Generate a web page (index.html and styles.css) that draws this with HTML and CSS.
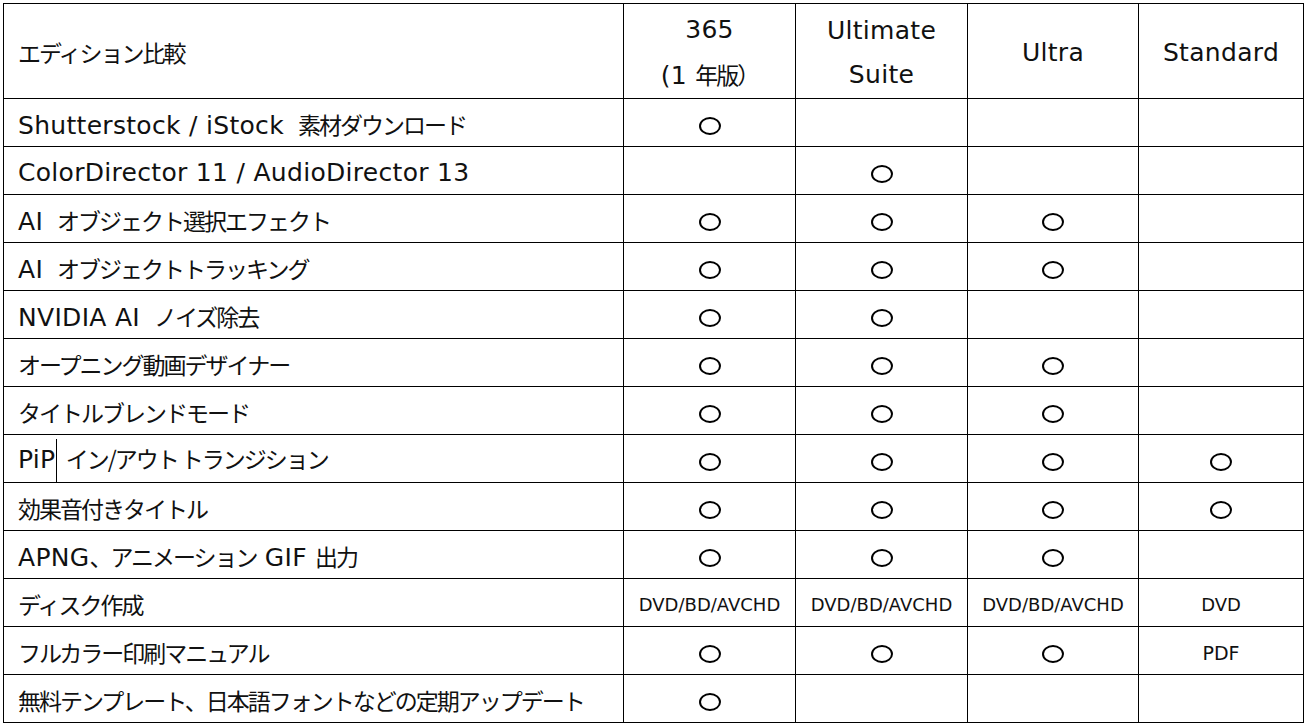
FILE: index.html
```html
<!DOCTYPE html>
<html lang="ja">
<head>
<meta charset="utf-8">
<title>エディション比較</title>
<link rel="stylesheet" href="styles.css">
</head>
<body>
<table class="cmp">
  <colgroup>
    <col class="c-name"><col class="c-ed"><col class="c-ed"><col class="c-ed2"><col class="c-ed3">
  </colgroup>
  <thead>
    <tr class="head">
      <th class="name"><span class="ja">エディション比較</span></th>
      <th>365<br>(1 <span class="ja">年版）</span></th>
      <th>Ultimate<br>Suite</th>
      <th>Ultra</th>
      <th>Standard</th>
    </tr>
  </thead>
  <tbody>
    <tr><td class="name">Shutterstock / iStock<span class="gap"></span><span class="ja">素材ダウンロード</span></td><td><span class="o"></span></td><td></td><td></td><td></td></tr>
    <tr><td class="name">ColorDirector 11 / AudioDirector 13</td><td></td><td><span class="o"></span></td><td></td><td></td></tr>
    <tr><td class="name">AI<span class="gap"></span><span class="ja">オブジェクト選択エフェクト</span></td><td><span class="o"></span></td><td><span class="o"></span></td><td><span class="o"></span></td><td></td></tr>
    <tr><td class="name">AI<span class="gap"></span><span class="ja">オブジェクトトラッキング</span></td><td><span class="o"></span></td><td><span class="o"></span></td><td><span class="o"></span></td><td></td></tr>
    <tr><td class="name">NVIDIA AI<span class="gap"></span><span class="ja">ノイズ除去</span></td><td><span class="o"></span></td><td><span class="o"></span></td><td></td><td></td></tr>
    <tr><td class="name"><span class="ja">オープニング動画デザイナー</span></td><td><span class="o"></span></td><td><span class="o"></span></td><td><span class="o"></span></td><td></td></tr>
    <tr><td class="name"><span class="ja">タイトルブレンドモード</span></td><td><span class="o"></span></td><td><span class="o"></span></td><td><span class="o"></span></td><td></td></tr>
    <tr><td class="name">PiP<span class="caret"></span> <span class="ja">イン/アウト トランジション</span></td><td><span class="o"></span></td><td><span class="o"></span></td><td><span class="o"></span></td><td><span class="o"></span></td></tr>
    <tr><td class="name"><span class="ja">効果音付きタイトル</span></td><td><span class="o"></span></td><td><span class="o"></span></td><td><span class="o"></span></td><td><span class="o"></span></td></tr>
    <tr><td class="name">APNG<span class="ja">、アニメーション</span> GIF <span class="ja">出力</span></td><td><span class="o"></span></td><td><span class="o"></span></td><td><span class="o"></span></td><td></td></tr>
    <tr><td class="name"><span class="ja">ディスク作成</span></td><td class="small">DVD/BD/AVCHD</td><td class="small">DVD/BD/AVCHD</td><td class="small">DVD/BD/AVCHD</td><td class="small">DVD</td></tr>
    <tr><td class="name"><span class="ja">フルカラー印刷マニュアル</span></td><td><span class="o"></span></td><td><span class="o"></span></td><td><span class="o"></span></td><td class="pdf">PDF</td></tr>
    <tr><td class="name"><span class="ja">無料テンプレート、日本語フォントなどの定期アップデート</span></td><td><span class="o"></span></td><td></td><td></td><td></td></tr>
  </tbody>
</table>
</body>
</html>
```

FILE: styles.css
```css
html, body {
  background: #fff;
}
body {
  margin: 3px;
  font-family: "DejaVu Sans", "Noto Sans CJK JP", sans-serif;
  font-size: 25px;
  letter-spacing: 0.3px;
  color: #111;
}
.cmp {
  border-collapse: collapse;
  table-layout: fixed;
  width: 1300px;
}
.c-name { width: 620px; }
.c-ed { width: 172px; }
.c-ed2 { width: 171px; }
.c-ed3 { width: 165px; }
.cmp th, .cmp td {
  border: 1px solid #000;
  padding: 4px 0 0 0;
  text-align: center;
  vertical-align: middle;
  font-weight: normal;
  white-space: nowrap;
  line-height: 28px;
}
.cmp tbody tr { height: 48px; }
.cmp .head { height: 94px; }
.cmp .head th { line-height: 44px; padding-top: 4px; }
.cmp .name {
  text-align: left;
  padding-left: 14px;
}
.ja {
  font-family: "Noto Sans CJK JP", sans-serif;
  font-size: 23px;
  letter-spacing: -2px;
}
.gap {
  display: inline-block;
  width: 14px;
}
.o {
  display: inline-block;
  width: 18px;
  height: 14px;
  border: 2px solid #000;
  border-radius: 50%;
  vertical-align: middle;
}
.small { font-size: 18px; letter-spacing: 0; }
.pdf { font-size: 19px; letter-spacing: 0; }
.caret {
  display: inline-block;
  width: 1px;
  height: 43px;
  background: #000;
  vertical-align: middle;
  margin-left: 1px;
}
```
